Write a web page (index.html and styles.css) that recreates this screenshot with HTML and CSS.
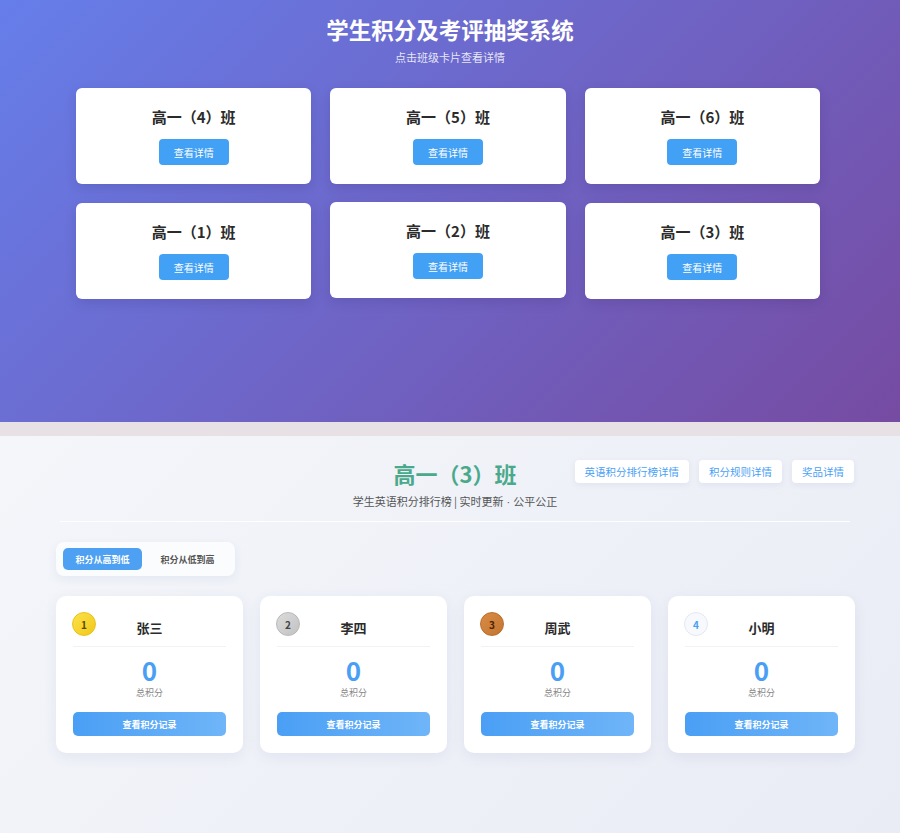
FILE: index.html
```html
<!DOCTYPE html>
<html lang="zh-CN">
<head>
    <meta charset="UTF-8">
    <meta name="viewport" content="width=device-width, initial-scale=1.0">
    <title>学生积分及考评抽奖系统</title>
    <link rel="stylesheet" href="styles.css">
</head>
<body>
    <!-- 班级列表 -->
    <section class="home">
        <h1 class="home-title">学生积分及考评抽奖系统</h1>
        <p class="home-sub">点击班级卡片查看详情</p>

        <div class="class-grid">
            <div class="class-card">
                <h3>高一（4）班</h3>
                <button class="detail-btn">查看详情</button>
            </div>
            <div class="class-card">
                <h3>高一（5）班</h3>
                <button class="detail-btn">查看详情</button>
            </div>
            <div class="class-card">
                <h3>高一（6）班</h3>
                <button class="detail-btn">查看详情</button>
            </div>
            <div class="class-card">
                <h3>高一（1）班</h3>
                <button class="detail-btn">查看详情</button>
            </div>
            <div class="class-card lifted">
                <h3>高一（2）班</h3>
                <button class="detail-btn">查看详情</button>
            </div>
            <div class="class-card">
                <h3>高一（3）班</h3>
                <button class="detail-btn">查看详情</button>
            </div>
        </div>
    </section>

    <div class="band"></div>

    <!-- 班级详情 -->
    <section class="detail">
        <div class="detail-inner">
            <header class="detail-header">
                <div></div>
                <div class="detail-heading">
                    <h2>高一（3）班</h2>
                    <p>学生英语积分排行榜 | 实时更新<span class="dot"> · </span>公平公正</p>
                </div>
                <div class="header-links">
                    <button class="link-btn">英语积分排行榜详情</button>
                    <button class="link-btn">积分规则详情</button>
                    <button class="link-btn">奖品详情</button>
                </div>
            </header>

            <div class="sort-box">
                <button class="sort-btn active">积分从高到低</button>
                <button class="sort-btn">积分从低到高</button>
            </div>

            <div class="student-grid">
                <div class="student-card">
                    <span class="rank gold">1</span>
                    <div class="student-name">张三</div>
                    <div class="score">0</div>
                    <div class="score-label">总积分</div>
                    <button class="record-btn">查看积分记录</button>
                </div>
                <div class="student-card">
                    <span class="rank silver">2</span>
                    <div class="student-name">李四</div>
                    <div class="score">0</div>
                    <div class="score-label">总积分</div>
                    <button class="record-btn">查看积分记录</button>
                </div>
                <div class="student-card">
                    <span class="rank bronze">3</span>
                    <div class="student-name">周武</div>
                    <div class="score">0</div>
                    <div class="score-label">总积分</div>
                    <button class="record-btn">查看积分记录</button>
                </div>
                <div class="student-card">
                    <span class="rank plain">4</span>
                    <div class="student-name">小明</div>
                    <div class="score">0</div>
                    <div class="score-label">总积分</div>
                    <button class="record-btn">查看积分记录</button>
                </div>
            </div>
        </div>
    </section>
</body>
</html>
```

FILE: styles.css
```css
body {
    margin: 0;
    padding: 0;
    font-family: "Noto Sans CJK SC", "Noto Sans", sans-serif;
    background-color: #eef1f7;
}

button {
    font-family: inherit;
    border: none;
    cursor: pointer;
}

/* 首页 */
.home {
    height: 422px;
    box-sizing: border-box;
    padding-top: 14px;
    background: linear-gradient(135deg, #667eea 0%, #764ba2 100%);
    text-align: center;
}

.home-title {
    margin: 0;
    font-size: 22.5px;
    line-height: 30px;
    font-weight: 700;
    color: #fff;
}

.home-sub {
    margin: 5px 0 0;
    font-size: 11px;
    line-height: 16px;
    color: rgba(255, 255, 255, 0.85);
}

.class-grid {
    width: 744px;
    margin: 23px 0 0 76px;
    display: grid;
    grid-template-columns: repeat(3, 1fr);
    gap: 19px;
}

.class-card {
    background-color: #fff;
    border-radius: 6px;
    padding: 19px 0;
    box-shadow: 0 4px 12px rgba(40, 30, 90, 0.15);
}

.class-card.lifted {
    transform: translateY(-1px);
}

.class-card h3 {
    margin: 0;
    font-size: 15px;
    line-height: 20px;
    font-weight: 700;
    color: #2b2b2b;
}

.detail-btn {
    margin-top: 12px;
    width: 70px;
    height: 26px;
    border-radius: 4px;
    background-color: #42a0f5;
    color: #fff;
    font-size: 10px;
}

.band {
    height: 14px;
    background-color: #e7e0e4;
}

/* 详情页 */
.detail {
    height: 397px;
    background: linear-gradient(135deg, #f4f6fa 0%, #e9ecf5 100%);
}

.detail-inner {
    margin: 0 46px 0 56px;
    padding-top: 22px;
}

.detail-header {
    display: grid;
    grid-template-columns: 1fr auto 1fr;
    align-items: start;
    padding-bottom: 11px;
    border-bottom: 1px solid rgba(255, 255, 255, 0.9);
    margin: 0 4px;
}

.detail-heading {
    text-align: center;
}

.detail-heading h2 {
    margin: 0;
    font-size: 22px;
    line-height: 30px;
    font-weight: 700;
    color: #4aa98b;
}

.detail-heading p {
    margin: 5px 0 0;
    font-size: 11px;
    line-height: 16px;
    color: #555;
}

.detail-heading .dot {
    font-family: "Liberation Sans", sans-serif;
}

.header-links {
    justify-self: end;
    display: flex;
    gap: 10px;
    margin-right: -4px;
    padding-top: 2px;
}

.link-btn {
    height: 23px;
    padding: 0 10px;
    border-radius: 4px;
    background-color: #fff;
    color: #4a9ff5;
    font-size: 10.5px;
    box-shadow: 0 2px 6px rgba(60, 80, 140, 0.08);
}

.sort-box {
    display: inline-flex;
    gap: 6px;
    margin-top: 20px;
    padding: 6px 8px 6px 7px;
    background-color: #fbfcfe;
    border-radius: 8px;
    box-shadow: 0 3px 10px rgba(60, 80, 140, 0.07);
}

.sort-btn {
    width: 79px;
    height: 22px;
    border-radius: 5px;
    background-color: transparent;
    color: #555;
    font-size: 9px;
    font-weight: 700;
}

.sort-btn.active {
    background-color: #4da0f2;
    color: #fff;
}

.student-grid {
    display: grid;
    grid-template-columns: repeat(4, 187px);
    gap: 17px;
    margin-top: 20px;
}

.student-card {
    position: relative;
    height: 157px;
    box-sizing: border-box;
    padding: 22px 17px 16px;
    background-color: #fff;
    border-radius: 10px;
    text-align: center;
    box-shadow: 0 4px 14px rgba(60, 80, 140, 0.08);
}

.rank {
    position: absolute;
    top: 16px;
    left: 16px;
    width: 24px;
    height: 24px;
    border-radius: 50%;
    box-sizing: border-box;
    display: flex;
    align-items: center;
    justify-content: center;
    font-size: 10px;
    font-weight: 700;
}

.rank.gold {
    background: linear-gradient(135deg, #fbe24a, #f2c81a);
    border: 1px solid #e8c21a;
    color: #5a4a00;
}

.rank.silver {
    background: linear-gradient(135deg, #dcdcdc, #c2c2c2);
    border: 1px solid #b8b8b8;
    color: #444;
}

.rank.bronze {
    background: linear-gradient(135deg, #d98c45, #c47630);
    border: 1px solid #b86c28;
    color: #4a2500;
}

.rank.plain {
    background-color: #f7f9fc;
    border: 1px solid #e3e8f0;
    color: #4a9ff5;
}

.student-name {
    font-size: 13px;
    line-height: 20px;
    font-weight: 700;
    color: #2b2b2b;
    padding-bottom: 8px;
    border-bottom: 1px solid #f0f2f5;
}

.score {
    margin-top: 9px;
    font-size: 26px;
    line-height: 28px;
    font-weight: 700;
    color: #4a9ff5;
}

.score-label {
    margin-top: 3px;
    font-size: 9px;
    line-height: 12px;
    color: #888;
}

.record-btn {
    margin-top: 13px;
    width: 100%;
    height: 24px;
    border-radius: 5px;
    background: linear-gradient(90deg, #4a9ff5, #6fb5f8);
    color: #fff;
    font-size: 9px;
    font-weight: 700;
}
```
